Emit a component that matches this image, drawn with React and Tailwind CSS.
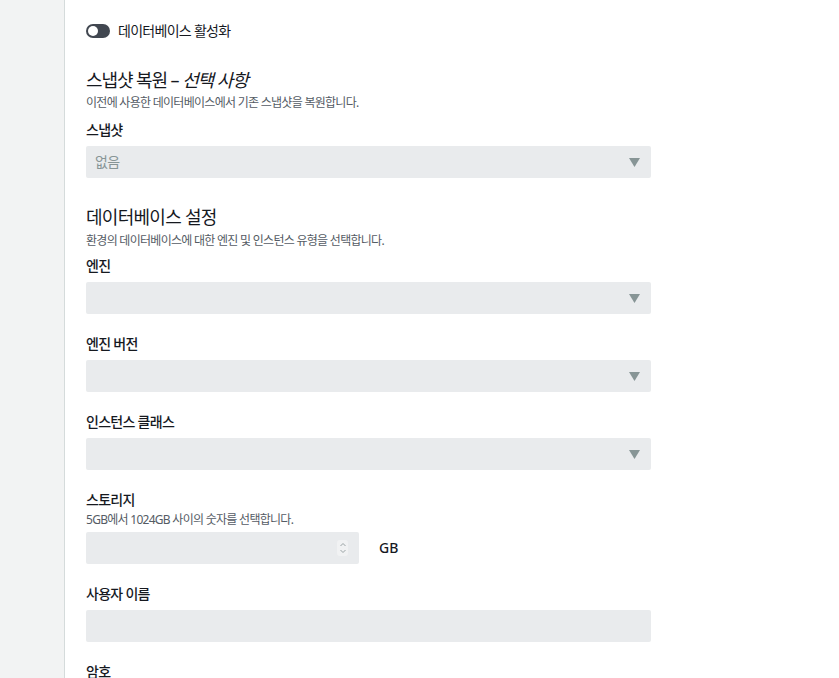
import React from "react";

const font = { fontFamily: '"Noto Sans", "Noto Sans CJK KR", sans-serif' };

const Caret = () => (
  <svg width="11" height="9" viewBox="0 0 11 9" className="absolute right-[11px] top-[12px]">
    <path d="M0 0 H11 L5.5 9 Z" fill="#879596" />
  </svg>
);

const Select = ({ value }) => (
  <div className="relative h-[32px] w-[565px] rounded-[2px] bg-[#e9ebed]">
    {value ? (
      <span className="absolute left-[9px] top-[6px] text-[14px] leading-[20px] text-[#879596]">
        {value}
      </span>
    ) : null}
    <Caret />
  </div>
);

const Label = ({ children, className = "" }) => (
  <div className={"text-[14px] leading-[20px] font-medium text-[#16191f] " + className}>
    {children}
  </div>
);

const Desc = ({ children, className = "" }) => (
  <div className={"text-[12px] leading-[16px] text-[#545b64] " + className}>{children}</div>
);

const Field = ({ label, value }) => (
  <div className="mt-[20px] first:mt-0">
    <Label>{label}</Label>
    <div className="mt-[6px]">
      <Select value={value} />
    </div>
  </div>
);

export default function App() {
  return (
    <div className="flex h-[678px] w-[839px] overflow-hidden bg-white tracking-[-0.045em]" style={font}>
      <div className="h-full w-[65px] shrink-0 border-r border-[#d5dbdb] bg-[#f2f3f3]" />
      <div className="flex-1 pl-[21px] pt-[21px]">
        <div className="flex items-center gap-[8px]">
          <div className="flex h-[14px] w-[24px] items-center rounded-full bg-[#414750] px-[2px]">
            <div className="h-[10px] w-[10px] rounded-full bg-white" />
          </div>
          <span className="text-[14px] leading-[20px] text-[#16191f]">데이터베이스 활성화</span>
        </div>

        <div className="mt-[27px] text-[18px] leading-[24px] font-normal tracking-[-0.06em] text-[#16191f]">
          스냅샷 복원 – <i>선택 사항</i>
        </div>
        <Desc className="mt-[3px]">이전에 사용한 데이터베이스에서 기존 스냅샷을 복원합니다.</Desc>
        <div className="mt-[9px]">
          <Field label="스냅샷" value="없음" />
        </div>

        <div className="mt-[27px] text-[18px] leading-[24px] font-normal text-[#16191f]">
          데이터베이스 설정
        </div>
        <Desc className="mt-[4px]">환경의 데이터베이스에 대한 엔진 및 인스턴스 유형을 선택합니다.</Desc>
        <div className="mt-[7px] flex flex-col">
          <Field label="엔진" />
          <Field label="엔진 버전" />
          <Field label="인스턴스 클래스" />
        </div>

        <Label className="mt-[20px]">스토리지</Label>
        <Desc className="mt-[2px]">5GB에서 1024GB 사이의 숫자를 선택합니다.</Desc>
        <div className="mt-[4px] flex items-center gap-[20px]">
          <div className="relative h-[32px] w-[273px] rounded-[2px] bg-[#e9ebed]">
            <div className="absolute right-[11px] top-[8px] flex h-[16px] w-[11px] flex-col items-center justify-center rounded-[3px] bg-[#f1f2f3]">
              <svg width="8" height="12" viewBox="0 0 8 12">
                <path d="M1.5 4 L4 1.5 L6.5 4 M1.5 8 L4 10.5 L6.5 8" fill="none" stroke="#9aa3a5" strokeWidth="1" />
              </svg>
            </div>
          </div>
          <span className="text-[14px] leading-[20px] font-medium tracking-normal text-[#16191f]">GB</span>
        </div>

        <Label className="mt-[20px]">사용자 이름</Label>
        <div className="mt-[6px] h-[32px] w-[565px] rounded-[2px] bg-[#e9ebed]" />

        <Label className="mt-[20px]">암호</Label>
      </div>
    </div>
  );
}
